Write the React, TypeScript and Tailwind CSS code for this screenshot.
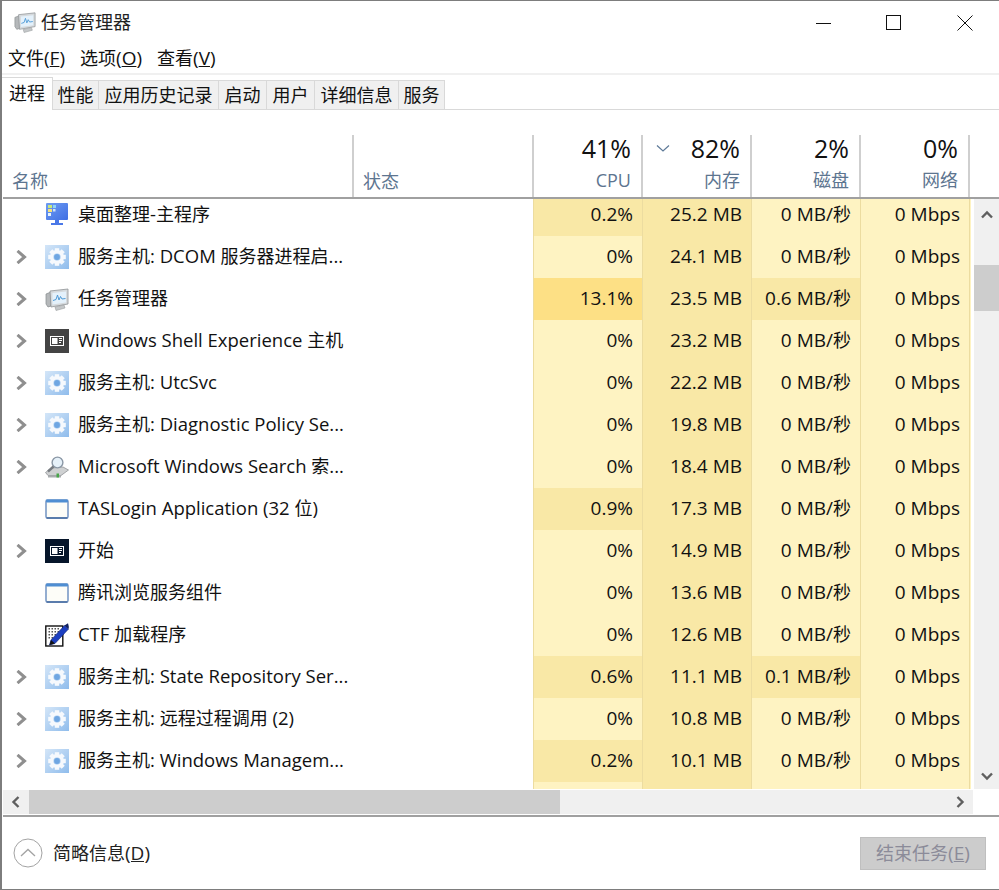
import React from "react";

const FONT = "font-['Open_Sans','Noto_Sans_CJK_SC',sans-serif]";

type Shade = "l" | "m" | "s";
const shade: Record<Shade, string> = {
  l: "bg-[#fef3c2]",
  m: "bg-[#f9e8a6]",
  s: "bg-[#fde085]",
};

/* Latin runs are set a little larger than the CJK runs, as in the original UI font */
function Mixed({ text, latin }: { text: string; latin: string }) {
  const parts = text.split(/([\u4e00-\u9fff]+)/).filter(Boolean);
  return (
    <>
      {parts.map((p, i) =>
        /[\u4e00-\u9fff]/.test(p) ? (
          <span key={i}>{p}</span>
        ) : (
          <span key={i} className={latin}>
            {p}
          </span>
        )
      )}
    </>
  );
}

function Gear() {
  const teeth = [0, 45, 90, 135, 180, 225, 270, 315];
  return (
    <svg width="24" height="24" viewBox="0 0 24 24">
      <defs>
        <linearGradient id="gearbg" x1="0" y1="0" x2="1" y2="1">
          <stop offset="0" stopColor="#d4e6f8" />
          <stop offset="1" stopColor="#8fbcec" />
        </linearGradient>
      </defs>
      <rect width="24" height="24" fill="url(#gearbg)" />
      <g fill="#f6f9fd">
        {teeth.map((a) => (
          <rect key={a} x="9.8" y="3.2" width="4.4" height="5" transform={`rotate(${a} 12 12)`} />
        ))}
      </g>
      <circle cx="12" cy="12" r="5.4" fill="none" stroke="#f6f9fd" strokeWidth="3.2" />
      <circle cx="12" cy="12" r="2.9" fill="#6fa6e2" />
    </svg>
  );
}

function TaskIcon({ size = 24 }: { size?: number }) {
  return (
    <svg width={size} height={size} viewBox="0 0 24 24">
      <path d="M1 7 L6 5 L6 19 L3 20 L1 17 Z" fill="#b5b8ba" stroke="#85898c" strokeWidth="0.7" />
      <path d="M5 4 L23 2 L23 17 L6 20 Z" fill="#d6dadd" stroke="#8f9396" strokeWidth="0.8" />
      <path d="M7.5 6 L21 4.5 L21 15.5 L7.5 17.5 Z" fill="#e4f1fb" />
      <path d="M8 13.5 L11 12.5 L12.5 8 L14 13 L15.5 9.5 L17 12 L20.5 11.5" fill="none" stroke="#4f9ad6" strokeWidth="1" />
      <path d="M10 20 L19 18 L20 21 L11 23.5 Z" fill="#c4c7c9" stroke="#9a9da0" strokeWidth="0.6" />
    </svg>
  );
}

function Shell({ bg }: { bg: string }) {
  return (
    <svg width="24" height="24" viewBox="0 0 24 24">
      <rect width="24" height="24" fill={bg} />
      <rect x="5.5" y="7.5" width="13" height="9" fill="none" stroke="#fff" strokeWidth="1" />
      <rect x="7" y="9" width="5.5" height="6" fill="#fff" />
      <path d="M14 9.5h3M14 11.5h3M14 13.5h2" stroke="#fff" strokeWidth="1" />
    </svg>
  );
}

function SearchIcon() {
  return (
    <svg width="24" height="24" viewBox="0 0 24 24">
      <path d="M0.5 17.5 L6.5 13 L18 12 L23.5 15 L16 20.5 L3 20.5 Z" fill="#cfd1d2" stroke="#8f9295" strokeWidth="0.8" />
      <path d="M3 20.5 L16 20.5 L16 22.5 L3 22.5 Z" fill="#a9acae" />
      <rect x="11.5" y="18.5" width="2.5" height="4" fill="#49a64a" />
      <circle cx="12.5" cy="7.5" r="5.4" fill="#e6f1f9" stroke="#8a97a5" strokeWidth="1.4" />
      <path d="M8.5 11.5 L3 16.5" stroke="#767b80" strokeWidth="2.4" />
    </svg>
  );
}

function WinIcon() {
  return (
    <svg width="24" height="24" viewBox="0 0 24 24">
      <rect x="1" y="3" width="22" height="18" rx="1.5" fill="#fdfdf8" stroke="#7a9ac6" strokeWidth="1.6" />
      <rect x="1" y="2.5" width="22" height="3" rx="1" fill="#4f8ed2" />
      <path d="M1.5 21 H22.5" stroke="#4a6ea3" strokeWidth="1.6" />
    </svg>
  );
}

function PenIcon() {
  return (
    <svg width="24" height="24" viewBox="0 0 24 24">
      <rect x="0.8" y="3" width="17" height="20" fill="#fff" stroke="#111" strokeWidth="1.4" />
      <g fill="#555">
        {[5, 8, 11, 14].map((y) =>
          [3.5, 6.5, 9.5, 12.5].map((x) => <rect key={`${x}-${y}`} x={x} y={y} width="1.5" height="1.5" />)
        )}
      </g>
      <path d="M6 17 L19.5 2.5 L23.5 6 L10 20.5 L4.5 22 Z" fill="#1c3fc0" stroke="#0b1f70" strokeWidth="0.6" />
      <path d="M19.5 2.5 L23 0.3 L23.9 4 L23.5 6 Z" fill="#10205f" />
      <path d="M4.5 22 L6 17 L10 20.5 Z" fill="#111" />
    </svg>
  );
}

function DeskIcon() {
  return (
    <svg width="24" height="24" viewBox="0 0 24 24">
      <defs>
        <linearGradient id="deskbg" x1="0" y1="0" x2="1" y2="1">
          <stop offset="0" stopColor="#6f9cf2" />
          <stop offset="1" stopColor="#3f6fe4" />
        </linearGradient>
      </defs>
      <rect x="1" y="0" width="22" height="17" rx="1" fill="url(#deskbg)" />
      <rect x="3" y="2" width="4" height="3" fill="#c8e87a" />
      <rect x="8" y="2" width="3" height="3" fill="#8fd6f4" />
      <rect x="3" y="6" width="4" height="3" fill="#f4e27a" />
      <rect x="3" y="10" width="3" height="3" fill="#e8f4fa" />
      <rect x="8" y="6" width="2.5" height="2.5" fill="#cfe4fa" />
      <rect x="10" y="17" width="4" height="3" fill="#4a78e8" />
      <rect x="6" y="20" width="12" height="2" fill="#4a78e8" />
    </svg>
  );
}

function Chevron({ d, color = "#6f6f6f", w = 2.4, size = 12 }: { d: string; color?: string; w?: number; size?: number }) {
  return (
    <svg width={size} height={size} viewBox="0 0 12 12">
      <path d={d} fill="none" stroke={color} strokeWidth={w} />
    </svg>
  );
}

type Row = {
  icon: React.ReactNode;
  arrow: boolean;
  name: string;
  cpu: string;
  cpuS: Shade;
  mem: string;
  disk: string;
  diskS: Shade;
};

const rows: Row[] = [
  { icon: <DeskIcon />, arrow: false, name: "桌面整理-主程序", cpu: "0.2%", cpuS: "m", mem: "25.2 MB", disk: "0 MB/秒", diskS: "l" },
  { icon: <Gear />, arrow: true, name: "服务主机: DCOM 服务器进程启...", cpu: "0%", cpuS: "l", mem: "24.1 MB", disk: "0 MB/秒", diskS: "l" },
  { icon: <TaskIcon />, arrow: true, name: "任务管理器", cpu: "13.1%", cpuS: "s", mem: "23.5 MB", disk: "0.6 MB/秒", diskS: "m" },
  { icon: <Shell bg="#444444" />, arrow: true, name: "Windows Shell Experience 主机", cpu: "0%", cpuS: "l", mem: "23.2 MB", disk: "0 MB/秒", diskS: "l" },
  { icon: <Gear />, arrow: true, name: "服务主机: UtcSvc", cpu: "0%", cpuS: "l", mem: "22.2 MB", disk: "0 MB/秒", diskS: "l" },
  { icon: <Gear />, arrow: true, name: "服务主机: Diagnostic Policy Se...", cpu: "0%", cpuS: "l", mem: "19.8 MB", disk: "0 MB/秒", diskS: "l" },
  { icon: <SearchIcon />, arrow: true, name: "Microsoft Windows Search 索...", cpu: "0%", cpuS: "l", mem: "18.4 MB", disk: "0 MB/秒", diskS: "l" },
  { icon: <WinIcon />, arrow: false, name: "TASLogin Application (32 位)", cpu: "0.9%", cpuS: "m", mem: "17.3 MB", disk: "0 MB/秒", diskS: "l" },
  { icon: <Shell bg="#06152a" />, arrow: true, name: "开始", cpu: "0%", cpuS: "l", mem: "14.9 MB", disk: "0 MB/秒", diskS: "l" },
  { icon: <WinIcon />, arrow: false, name: "腾讯浏览服务组件", cpu: "0%", cpuS: "l", mem: "13.6 MB", disk: "0 MB/秒", diskS: "l" },
  { icon: <PenIcon />, arrow: false, name: "CTF 加载程序", cpu: "0%", cpuS: "l", mem: "12.6 MB", disk: "0 MB/秒", diskS: "l" },
  { icon: <Gear />, arrow: true, name: "服务主机: State Repository Ser...", cpu: "0.6%", cpuS: "m", mem: "11.1 MB", disk: "0.1 MB/秒", diskS: "m" },
  { icon: <Gear />, arrow: true, name: "服务主机: 远程过程调用 (2)", cpu: "0%", cpuS: "l", mem: "10.8 MB", disk: "0 MB/秒", diskS: "l" },
  { icon: <Gear />, arrow: true, name: "服务主机: Windows Managem...", cpu: "0.2%", cpuS: "m", mem: "10.1 MB", disk: "0 MB/秒", diskS: "l" },
  { icon: null, arrow: false, name: "", cpu: "", cpuS: "l", mem: "", disk: "", diskS: "l" },
];

const tabs = [
  { t: "性能", w: "w-[46px]" },
  { t: "应用历史记录", w: "w-[120px]" },
  { t: "启动", w: "w-[48px]" },
  { t: "用户", w: "w-[48px]" },
  { t: "详细信息", w: "w-[84px]" },
  { t: "服务", w: "w-[46px]" },
];

const GRID = "grid grid-cols-[351px_180px_109px_109px_109px_109px_2px]";
const HEAD_GRID = "grid grid-cols-[350px_180px_109px_109px_109px_109px_2px]";

function Cell({ s, children }: { s: Shade; children?: string }) {
  return (
    <div className={`${shade[s]} border-l border-[#ecdca0] flex items-center justify-end pr-[9px] pb-[2px] whitespace-nowrap`}>
      <div>
        <Mixed text={children ?? ""} latin="text-[19px]" />
      </div>
    </div>
  );
}

function HeadCol({ pct, label, sort }: { pct: string; label: string; sort?: boolean }) {
  return (
    <div className="relative border-l-2 border-[#cfcfcf] flex flex-col items-end pr-[10px]">
      {sort && (
        <svg className="absolute left-[13px] top-[9px]" width="14" height="9" viewBox="0 0 14 9">
          <path d="M1 1.5 L7 7 L13 1.5" fill="none" stroke="#5e7a98" strokeWidth="1.2" />
        </svg>
      )}
      <div className="text-[25px] leading-[30px] -mt-[2px] text-[#111]">{pct}</div>
      <div className="text-[18px] leading-[24px] mt-[5px] text-[#5d7590]">{label}</div>
    </div>
  );
}

export default function App() {
  return (
    <div className={`${FONT} w-[999px] h-[890px] overflow-hidden bg-white border-l-2 border-t border-b border-[#7d7d7d] flex flex-col text-[18px] text-[#111]`}>
      {/* title bar */}
      <div className="h-[39px] shrink-0 flex items-center">
        <div className="ml-[12px] mr-[5px] flex mt-[3px]">
          <TaskIcon size={22} />
        </div>
        <div className="text-[18px] mt-[3px] text-[#222]">任务管理器</div>
        <div className="ml-auto flex items-center mt-[5px]">
          <svg width="16" height="16" viewBox="0 0 16 16" className="mr-[54px]">
            <path d="M0 8.5 H15" stroke="#111" strokeWidth="1" />
          </svg>
          <svg width="16" height="16" viewBox="0 0 16 16" className="mr-[55px]">
            <rect x="0.5" y="0.5" width="14" height="14" fill="none" stroke="#111" strokeWidth="1" />
          </svg>
          <svg width="16" height="16" viewBox="0 0 16 16" className="mr-[26px]">
            <path d="M0.5 0.5 L15.5 15.5 M15.5 0.5 L0.5 15.5" stroke="#111" strokeWidth="1" />
          </svg>
        </div>
      </div>
      {/* menu */}
      <div className="h-[33px] shrink-0 flex items-center pl-[6px] gap-[15px] text-[#111] border-b-2 border-[#f0f0f0] box-content">
        <span className="mt-[3px]">文件<span className="text-[19px]">(<span className="underline">F</span>)</span></span>
        <span className="mt-[3px]">选项<span className="text-[19px]">(<span className="underline">O</span>)</span></span>
        <span className="mt-[3px]">查看<span className="text-[19px]">(<span className="underline">V</span>)</span></span>
      </div>
      {/* tabs */}
      <div className="h-[35px] shrink-0 flex items-end border-b border-[#d9d9d9] relative">
        <div className="w-[51px] h-[33px] -mb-px bg-white border-t border-r border-[#d9d9d9] flex items-center justify-center relative pb-[2px]">
          进程
        </div>
        {tabs.map((t) => (
          <div key={t.t} className={`${t.w} h-[29px] bg-[#f0f0f0] border-t border-r border-[#d9d9d9] flex items-center justify-center`}>
            {t.t}
          </div>
        ))}
      </div>
      {/* spacer above header */}
      <div className="h-[25px] shrink-0" />
      {/* header */}
      <div className={`${HEAD_GRID} h-[62px] shrink-0`}>
        <div className="flex items-end pl-[10px] pb-[4px] text-[#5d7590] leading-[24px]">名称</div>
        <div className="flex items-end pl-[9px] pb-[4px] text-[#5d7590] leading-[24px] border-l-2 border-[#cfcfcf]">状态</div>
        <HeadCol pct="41%" label="CPU" />
        <HeadCol pct="82%" label="内存" sort />
        <HeadCol pct="2%" label="磁盘" />
        <HeadCol pct="0%" label="网络" />
        <div className="border-l-2 border-[#cfcfcf]" />
      </div>
      <div className="h-[2px] shrink-0 ml-px bg-[#a0a0a0]" />
      {/* body */}
      <div className="h-[590px] shrink-0 flex overflow-hidden">
        <div className="w-[972px] overflow-hidden">
          <div className="-mt-[5px]">
            {rows.map((r, i) => (
              <div key={i} className={`${GRID} h-[42px]`}>
                <div className="flex items-center whitespace-nowrap overflow-hidden">
                  <div className="w-[43px] shrink-0 pl-[12px] flex items-center">
                    {r.arrow && <Chevron d="M3 0.8 L9 6 L3 11.2" color="#8f8f8f" w={2.6} size={14} />}
                  </div>
                  <div className="w-6 h-6 shrink-0 mr-[9px]">{r.icon}</div>
                  <div className="pb-[2px]">
                    <Mixed text={r.name} latin="text-[18.5px]" />
                  </div>
                </div>
                <div />
                <Cell s={r.cpuS}>{r.cpu}</Cell>
                <Cell s="m">{r.mem}</Cell>
                <Cell s={r.diskS}>{r.disk}</Cell>
                <Cell s="l">{i < 14 ? "0 Mbps" : ""}</Cell>
                <div className="bg-[#fef3c2] border-l border-[#ecdca0]" />
              </div>
            ))}
          </div>
        </div>
        <div className="w-[25px] bg-[#f0f0f0] flex flex-col">
          <div className="h-[26px] flex items-center justify-center mt-[3px]">
            <Chevron d="M1 8.5 L6 3.5 L11 8.5" color="#5f5f5f" />
          </div>
          <div className="h-[46px] mt-[37px] bg-[#cdcdcd]" />
          <div className="mt-auto h-[26px] flex items-center justify-center">
            <Chevron d="M1 3.5 L6 8.5 L11 3.5" color="#5f5f5f" />
          </div>
        </div>
      </div>
      {/* horizontal scrollbar */}
      <div className="h-[24px] mt-px shrink-0 flex ml-px">
        <div className="w-[970px] bg-[#f0f0f0] flex">
          <div className="w-[26px] flex items-center justify-center">
            <Chevron d="M8.5 1 L3.5 6 L8.5 11" color="#5f5f5f" />
          </div>
          <div className="w-[531px] bg-[#cdcdcd]" />
          <div className="flex-1 flex items-center justify-end pr-[7px]">
            <Chevron d="M3.5 1 L8.5 6 L3.5 11" color="#5f5f5f" />
          </div>
        </div>
      </div>
      <div className="h-[2px] mt-px shrink-0 ml-px bg-[#a0a0a0]" />
      {/* footer */}
      <div className="flex-1 flex items-center pl-[11px] pr-[13px]">
        <svg width="30" height="30" viewBox="0 0 30 30">
          <circle cx="15" cy="15" r="14" fill="none" stroke="#a3a3a3" strokeWidth="1" />
          <path d="M8 18 L15 11.5 L22 18" fill="none" stroke="#a3a3a3" strokeWidth="1.3" />
        </svg>
        <div className="ml-[10px] text-[#222]">
          简略信息<span className="underline text-[19px]">(D)</span>
        </div>
        <div className="ml-auto w-[126px] h-[33px] bg-[#cccccc] border border-[#bfbfbf] flex items-center justify-center text-[#8b8b99]">
          <span>结束任务<span className="text-[19px]">(<span className="underline">E</span>)</span></span>
        </div>
      </div>
    </div>
  );
}
